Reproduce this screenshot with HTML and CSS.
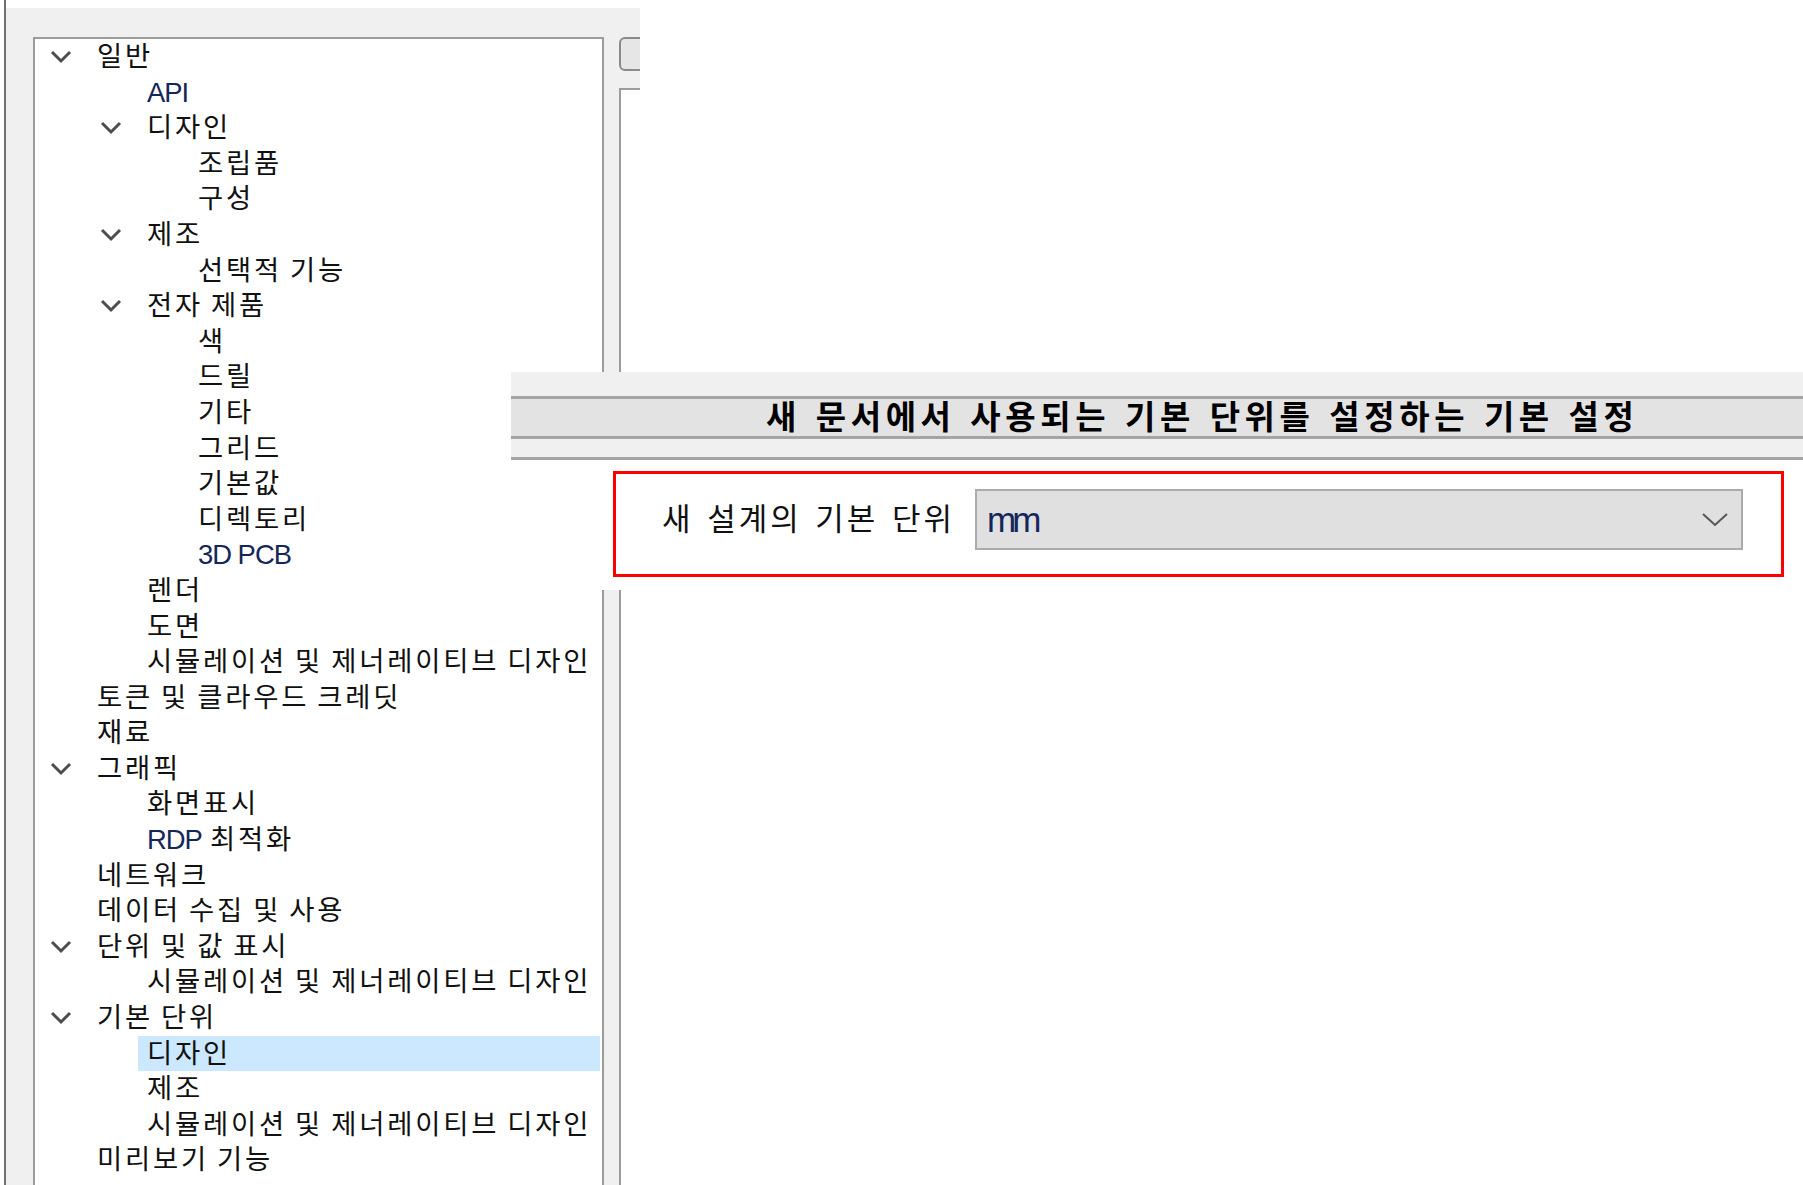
FILE: index.html
```html
<!DOCTYPE html>
<html lang="ko">
<head>
<meta charset="utf-8">
<title>기본 단위</title>
<link rel="stylesheet" href="styles.css">
</head>
<body>
<div class="frame">
  <div class="panel">
    <div class="tree">
      <div class="row l0"><span class="tw"><svg class="chev" viewBox="0 0 22 15"><polyline points="2,3 11,12 20,3"/></svg></span><span class="lbl">일반</span></div>
      <div class="row l1"><span class="tw"></span><span class="lbl"><span class="lat">API</span></span></div>
      <div class="row l1"><span class="tw"><svg class="chev" viewBox="0 0 22 15"><polyline points="2,3 11,12 20,3"/></svg></span><span class="lbl">디자인</span></div>
      <div class="row l2"><span class="tw"></span><span class="lbl">조립품</span></div>
      <div class="row l2"><span class="tw"></span><span class="lbl">구성</span></div>
      <div class="row l1"><span class="tw"><svg class="chev" viewBox="0 0 22 15"><polyline points="2,3 11,12 20,3"/></svg></span><span class="lbl">제조</span></div>
      <div class="row l2"><span class="tw"></span><span class="lbl">선택적 기능</span></div>
      <div class="row l1"><span class="tw"><svg class="chev" viewBox="0 0 22 15"><polyline points="2,3 11,12 20,3"/></svg></span><span class="lbl">전자 제품</span></div>
      <div class="row l2"><span class="tw"></span><span class="lbl">색</span></div>
      <div class="row l2"><span class="tw"></span><span class="lbl">드릴</span></div>
      <div class="row l2"><span class="tw"></span><span class="lbl">기타</span></div>
      <div class="row l2"><span class="tw"></span><span class="lbl">그리드</span></div>
      <div class="row l2"><span class="tw"></span><span class="lbl">기본값</span></div>
      <div class="row l2"><span class="tw"></span><span class="lbl">디렉토리</span></div>
      <div class="row l2"><span class="tw"></span><span class="lbl"><span class="lat">3D PCB</span></span></div>
      <div class="row l1"><span class="tw"></span><span class="lbl">렌더</span></div>
      <div class="row l1"><span class="tw"></span><span class="lbl">도면</span></div>
      <div class="row l1"><span class="tw"></span><span class="lbl">시뮬레이션 및 제너레이티브 디자인</span></div>
      <div class="row l0"><span class="tw"></span><span class="lbl">토큰 및 클라우드 크레딧</span></div>
      <div class="row l0"><span class="tw"></span><span class="lbl">재료</span></div>
      <div class="row l0"><span class="tw"><svg class="chev" viewBox="0 0 22 15"><polyline points="2,3 11,12 20,3"/></svg></span><span class="lbl">그래픽</span></div>
      <div class="row l1"><span class="tw"></span><span class="lbl">화면표시</span></div>
      <div class="row l1"><span class="tw"></span><span class="lbl"><span class="lat">RDP</span> 최적화</span></div>
      <div class="row l0"><span class="tw"></span><span class="lbl">네트워크</span></div>
      <div class="row l0"><span class="tw"></span><span class="lbl">데이터 수집 및 사용</span></div>
      <div class="row l0"><span class="tw"><svg class="chev" viewBox="0 0 22 15"><polyline points="2,3 11,12 20,3"/></svg></span><span class="lbl">단위 및 값 표시</span></div>
      <div class="row l1"><span class="tw"></span><span class="lbl">시뮬레이션 및 제너레이티브 디자인</span></div>
      <div class="row l0"><span class="tw"><svg class="chev" viewBox="0 0 22 15"><polyline points="2,3 11,12 20,3"/></svg></span><span class="lbl">기본 단위</span></div>
      <div class="row l1 sel"><span class="tw"></span><span class="lbl">디자인</span></div>
      <div class="row l1"><span class="tw"></span><span class="lbl">제조</span></div>
      <div class="row l1"><span class="tw"></span><span class="lbl">시뮬레이션 및 제너레이티브 디자인</span></div>
      <div class="row l0"><span class="tw"></span><span class="lbl">미리보기 기능</span></div>
    </div>
    <div class="side">
      <div class="btn"></div>
      <div class="box"></div>
    </div>
  </div>
</div>

<div class="overlay">
  <div class="band"></div>
  <div class="head">새 문서에서 사용되는 기본 단위를 설정하는 기본 설정</div>
  <div class="band2"></div>
  <div class="redbox">
    <span class="flabel">새 설계의 기본 단위</span>
    <div class="combo">
      <span class="val">mm</span>
      <svg class="cchev" viewBox="0 0 26 15"><polyline points="1,2 13,13 25,2"/></svg>
    </div>
  </div>
</div>
</body>
</html>
```

FILE: styles.css
```css
html, body {
  margin: 0;
  background: #ffffff;
}

body {
  width: 1803px;
  height: 1185px;
  overflow: hidden;
  position: relative;
  font-family: "Liberation Sans", "Noto Sans CJK KR", sans-serif;
  color: #111111;
}

.frame {
  margin-left: 4px;
  width: 636px;
  height: 1185px;
  box-sizing: border-box;
  border-left: 2px solid #707070;
  padding-top: 8px;
}

.panel {
  height: 100%;
  background: #f0f0f0;
  display: flex;
  gap: 15px;
  padding: 29px 0 0 27px;
  box-sizing: border-box;
  overflow: hidden;
}

.tree {
  width: 571px;
  flex: none;
  box-sizing: border-box;
  border: 2px solid #9c9c9c;
  border-bottom: 0;
  background: #ffffff;
}

.row {
  display: flex;
  align-items: center;
  height: 35.6px;
  font-size: 27.4px;
  letter-spacing: 2.8px;
  word-spacing: -2.3px;
  white-space: nowrap;
}

.l0 { padding-left: 15px; }
.l1 { padding-left: 65px; }
.l2 { padding-left: 116px; }

.tw {
  width: 47px;
  flex: none;
  display: flex;
  align-items: center;
}

.chev {
  width: 22px;
  height: 15px;
  fill: none;
  stroke: #4d4d4d;
  stroke-width: 3;
}

.lbl {
  line-height: 35.6px;
}

.sel .lbl {
  flex: 1;
  align-self: stretch;
  background: #cce8ff;
  margin-left: -9px;
  padding-left: 9px;
  margin-right: 2px;
}

.lat {
  color: #14265a;
  letter-spacing: -1px;
  word-spacing: 0;
}

.side {
  width: 21px;
  flex: none;
  overflow: hidden;
}

.btn {
  width: 40px;
  height: 34px;
  box-sizing: border-box;
  border: 2px solid #8a8a8a;
  border-radius: 6px;
  background: #e6e6e6;
}

.box {
  margin-top: 17px;
  width: 40px;
  height: 1200px;
  border-left: 2px solid #9c9c9c;
  border-top: 2px solid #9c9c9c;
  background: #ffffff;
}

.overlay {
  position: absolute;
  left: 511px;
  top: 372px;
  right: 0;
  height: 218px;
  background: #ffffff;
}

.band {
  height: 24px;
  background: #f0f0f0;
}

.head {
  height: 37px;
  line-height: 37px;
  background: #e3e3e3;
  border-top: 3px solid #a4a4a4;
  border-bottom: 3px solid #a4a4a4;
  padding-left: 255px;
  font-size: 33px;
  font-weight: 700;
  letter-spacing: 4.6px;
  word-spacing: 1px;
  color: #000000;
  white-space: nowrap;
  overflow: hidden;
}

.band2 {
  height: 18px;
  background: #f0f0f0;
  border-bottom: 3px solid #a4a4a4;
}

.redbox {
  margin: 11px 19px 0 102px;
  height: 106px;
  box-sizing: border-box;
  border: 3px solid #ff0000;
  display: flex;
  align-items: flex-start;
  padding: 15px 38px 0 46px;
}

.flabel {
  width: 313px;
  flex: none;
  font-size: 31px;
  line-height: 61px;
  letter-spacing: 3px;
  word-spacing: 2px;
  white-space: nowrap;
}

.combo {
  flex: 1;
  height: 61px;
  box-sizing: border-box;
  border: 2px solid #ababab;
  background: #e0e0e0;
  display: flex;
  align-items: center;
  justify-content: space-between;
  padding: 0 13px 0 10px;
}

.val {
  font-size: 35px;
  letter-spacing: -3.8px;
  color: #14265a;
}

.cchev {
  width: 26px;
  height: 15px;
  fill: none;
  stroke: #555555;
  stroke-width: 2;
}
```
